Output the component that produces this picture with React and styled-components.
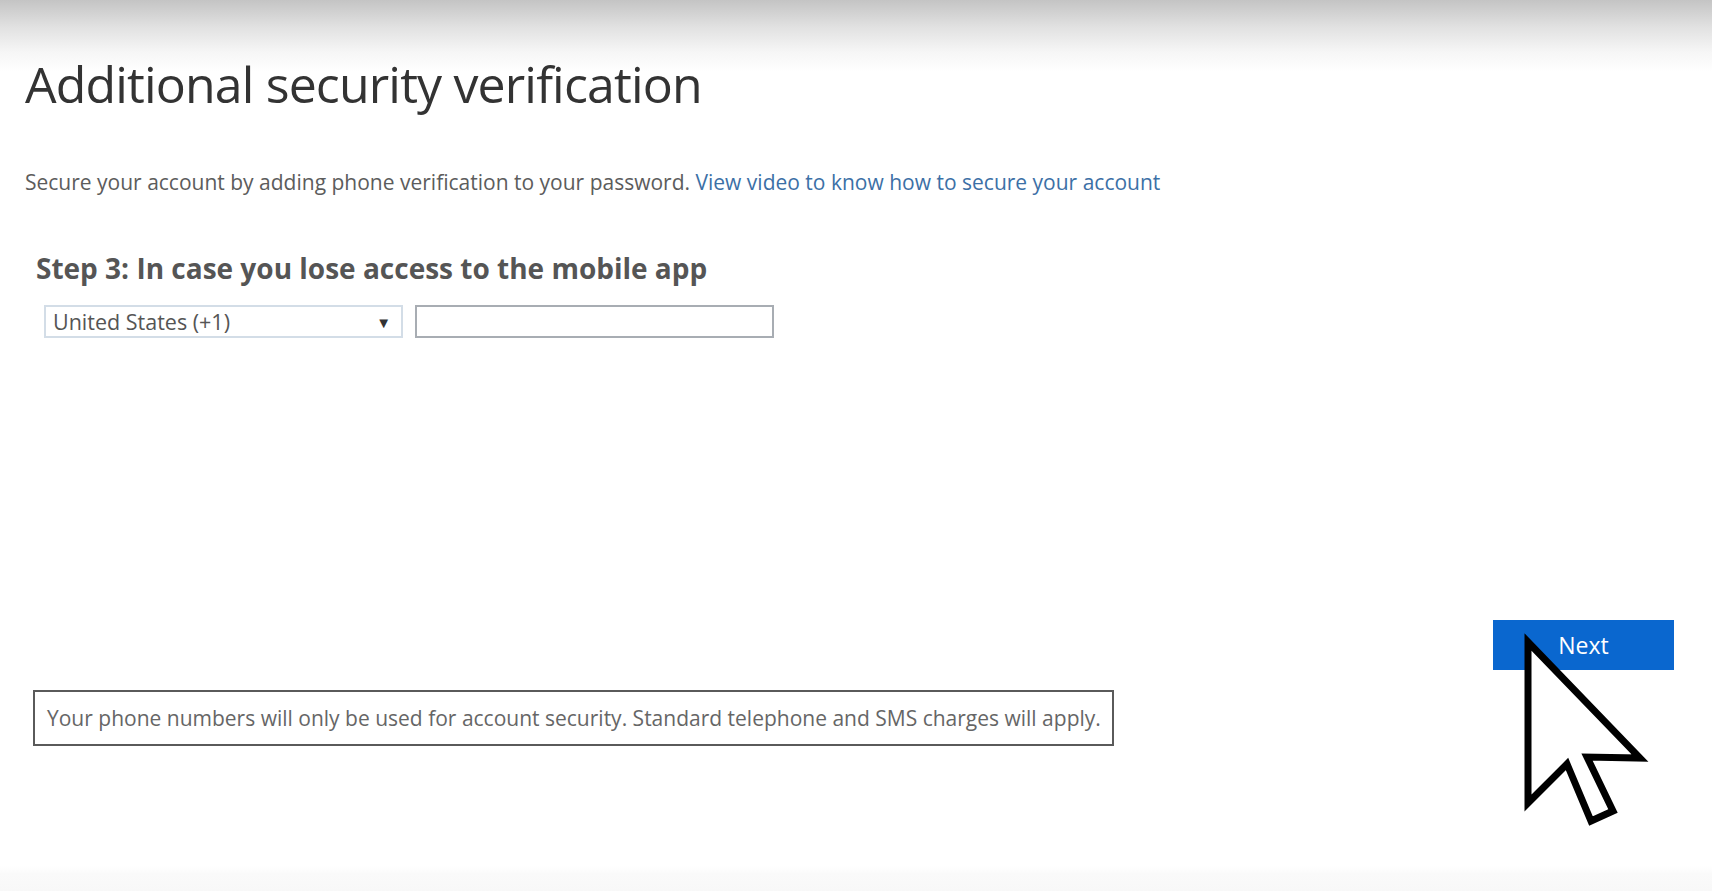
import React from "react";
import styled, { createGlobalStyle } from "styled-components";

const GlobalStyle = createGlobalStyle`
  html, body {
    margin: 0;
    padding: 0;
    background: #ffffff;
  }
  body {
    font-family: "Open Sans", "Noto Sans", sans-serif;
  }
`;

const Page = styled.div`
  position: relative;
  width: 1712px;
  height: 891px;
  overflow: hidden;
  background: linear-gradient(
    to bottom,
    #c4c4c4 0px,
    #e2e2e2 28px,
    #f6f6f6 52px,
    #ffffff 72px,
    #ffffff 866px,
    #fafafa 874px,
    #f8f8f8 891px
  );
`;

const Content = styled.div`
  display: flex;
  flex-direction: column;
  padding: 48px 38px 0 25px;
`;

const Title = styled.h1`
  margin: 0;
  font-size: 50px;
  font-weight: 400;
  line-height: 72px;
  letter-spacing: -0.85px;
  color: #333333;
`;

const Intro = styled.p`
  margin: 47px 0 0 0;
  font-size: 21px;
  line-height: 30px;
  color: #5c5c5c;
`;

const Link = styled.a`
  color: #3c70a6;
  text-decoration: none;
`;

const Section = styled.section`
  display: flex;
  flex-direction: column;
  gap: 18px;
  margin: 52px 0 0 11px;
`;

const StepTitle = styled.h2`
  margin: 0;
  font-size: 28px;
  font-weight: 700;
  line-height: 38px;
  color: #555555;
`;

const PhoneRow = styled.div`
  display: flex;
  gap: 12px;
  margin-left: 8px;
`;

const Select = styled.div`
  box-sizing: border-box;
  width: 359px;
  height: 33px;
  display: flex;
  align-items: center;
  justify-content: space-between;
  padding: 0 10px 0 7px;
  border: 2px solid #d3dde7;
  font-size: 21.5px;
  color: #555555;
`;

const Caret = styled.span`
  font-size: 15px;
  color: #333333;
`;

const PhoneInput = styled.input`
  box-sizing: border-box;
  width: 359px;
  height: 33px;
  border: 2px solid #a8adb3;
  outline: none;
  background: #ffffff;
`;

const ActionRow = styled.div`
  display: flex;
  justify-content: flex-end;
  margin-top: 282px;
`;

const NextButton = styled.button`
  width: 181px;
  height: 50px;
  border: none;
  background: #0a67cf;
  color: #ffffff;
  font-family: "Open Sans", sans-serif;
  font-size: 23px;
  padding: 0;
`;

const Notice = styled.div`
  box-sizing: border-box;
  width: 1081px;
  height: 56px;
  margin: 20px 0 0 8px;
  display: flex;
  align-items: center;
  padding: 0 12px;
  border: 2px solid #5a5a5a;
  font-size: 21px;
  color: #666666;
  white-space: nowrap;
`;

const Pointer = styled.svg`
  position: absolute;
  left: 1510px;
  top: 625px;
  width: 150px;
  height: 215px;
  pointer-events: none;
`;

export default function App() {
  return (
    <>
      <GlobalStyle />
      <Page>
        <Content>
          <Title>Additional security verification</Title>
          <Intro>
            Secure your account by adding phone verification to your password.{" "}
            <Link href="#">View video to know how to secure your account</Link>
          </Intro>
          <Section>
            <StepTitle>Step 3: In case you lose access to the mobile app</StepTitle>
            <PhoneRow>
              <Select>
                <span>United States (+1)</span>
                <Caret>▼</Caret>
              </Select>
              <PhoneInput type="text" />
            </PhoneRow>
          </Section>
          <ActionRow>
            <NextButton>Next</NextButton>
          </ActionRow>
          <Notice>
            Your phone numbers will only be used for account security. Standard
            telephone and SMS charges will apply.
          </Notice>
        </Content>
        <Pointer viewBox="1510 625 150 215">
          <polygon
            points="1528,642 1528,803 1567,764 1591,821 1613,811 1587,757 1640,758"
            fill="#ffffff"
            stroke="#000000"
            strokeWidth="7"
            strokeLinejoin="miter"
          />
        </Pointer>
      </Page>
    </>
  );
}
